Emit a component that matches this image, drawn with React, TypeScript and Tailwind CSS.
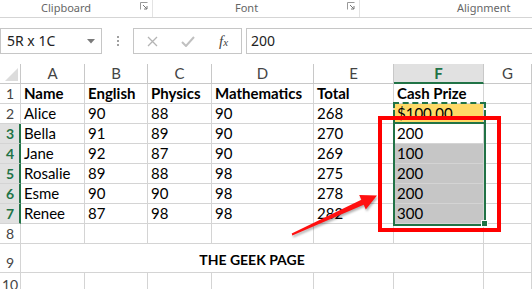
import { Fragment } from "react"

const cols = ["A", "B", "C", "D", "E", "F", "G"]

type Cell = { v?: string; bold?: boolean; bg?: string }

const rows: { n: string; h: string; hot?: boolean; cells: Cell[] }[] = [
  { n: "1", h: "h-[20px]", cells: [{ v: "Name", bold: true }, { v: "English", bold: true }, { v: "Physics", bold: true }, { v: "Mathematics", bold: true }, { v: "Total", bold: true }, { v: "Cash Prize", bold: true }, {}] },
  { n: "2", h: "h-[20px]", cells: [{ v: "Alice" }, { v: "90" }, { v: "88" }, { v: "90" }, { v: "268" }, { v: "$100.00", bg: "bg-[#ffd966]" }, {}] },
  { n: "3", h: "h-[20px]", hot: true, cells: [{ v: "Bella" }, { v: "91" }, { v: "89" }, { v: "90" }, { v: "270" }, { v: "200" }, {}] },
  { n: "4", h: "h-[20px]", hot: true, cells: [{ v: "Jane" }, { v: "92" }, { v: "87" }, { v: "90" }, { v: "269" }, { v: "100", bg: "bg-[#c6c6c6]" }, {}] },
  { n: "5", h: "h-[20px]", hot: true, cells: [{ v: "Rosalie" }, { v: "89" }, { v: "88" }, { v: "98" }, { v: "275" }, { v: "200", bg: "bg-[#c6c6c6]" }, {}] },
  { n: "6", h: "h-[20px]", hot: true, cells: [{ v: "Esme" }, { v: "90" }, { v: "90" }, { v: "98" }, { v: "278" }, { v: "200", bg: "bg-[#c6c6c6]" }, {}] },
  { n: "7", h: "h-[20px]", hot: true, cells: [{ v: "Renee" }, { v: "87" }, { v: "98" }, { v: "98" }, { v: "282" }, { v: "300", bg: "bg-[#c6c6c6]" }, {}] },
  { n: "8", h: "h-[20px]", cells: [{}, {}, {}, {}, {}, {}, {}] },
]

function Launcher() {
  return (
    <svg width="8" height="8" viewBox="0 0 8 8" className="mt-[2px]">
      <path d="M0.5 7.5V0.5H7.5" fill="none" stroke="#999" />
      <path d="M3 3L7 7M7 4V7H4" fill="none" stroke="#777" />
    </svg>
  )
}

export default function App() {
  return (
    <div className="relative w-[532px] h-[289px] overflow-hidden bg-white font-['Lato',sans-serif] text-black">
      {/* ribbon group labels */}
      <div className="flex h-[18px] border-b border-[#d5d5d5] font-['Noto_Sans',sans-serif] text-[11px] leading-[16px] text-[#666]">
        <div className="flex w-[153px] items-start border-r border-[#e3e3e3] pl-[41px] pr-[4px]">
          <span className="flex-1">Clipboard</span>
          <Launcher />
        </div>
        <div className="flex w-[207px] items-start border-r border-[#e3e3e3] pr-[4px]">
          <span className="flex-1 pl-[82px]">Font</span>
          <Launcher />
        </div>
        <div className="flex-1 pl-[97px]">Alignment</div>
      </div>

      {/* formula bar */}
      <div className="mt-[10px] flex h-[26px] items-stretch font-['Noto_Sans',sans-serif] text-[14px] text-[#222]">
        <div className="flex w-[102px] items-center border border-[#c6c6c6] pl-[6px] pr-[6px]">
          <span className="flex-1 leading-none">5R x 1C</span>
          <svg width="8" height="5" viewBox="0 0 8 5"><path d="M0 0H8L4 4.5Z" fill="#7a7a7a" /></svg>
        </div>
        <div className="flex w-[31px] flex-col items-center justify-center gap-[2px]">
          <span className="h-[2px] w-[2px] bg-[#a0a0a0]" />
          <span className="h-[2px] w-[2px] bg-[#a0a0a0]" />
          <span className="h-[2px] w-[2px] bg-[#a0a0a0]" />
        </div>
        <div className="flex w-[109px] items-center border border-[#c6c6c6] pl-[13px]">
          <svg width="11" height="11" viewBox="0 0 11 11"><path d="M1 1L10 10M10 1L1 10" stroke="#b4b4b4" strokeWidth="1.3" /></svg>
          <svg width="14" height="11" viewBox="0 0 14 11" className="ml-[23px]"><path d="M1 6L5 10L13 1" fill="none" stroke="#c0c0c0" strokeWidth="2" /></svg>
          <span className="ml-[24px] font-['Liberation_Serif',serif] text-[15px] italic text-[#444]">f<span className="text-[11px]">x</span></span>
        </div>
        <div className="ml-[4px] flex flex-1 items-center border-y border-l border-[#c6c6c6] pl-[4px] leading-none">200</div>
      </div>

      {/* grid */}
      <div className="mt-[10px] grid grid-cols-[21px_64px_63px_64px_102px_80px_90px_48px] text-[15px]">
        <div className="relative h-[20px] border-r border-b border-[#c8c8c8]">
          <svg width="13" height="13" viewBox="0 0 13 13" className="absolute left-[5px] top-[4px]"><path d="M13 0V13H0Z" fill="#dcdcdc" /></svg>
        </div>
        {cols.map((c) =>
          c === "F" ? (
            <div key={c} className="flex h-[20px] items-center justify-center border-r border-b-2 border-r-[#c8c8c8] border-b-[#217346] bg-[#e1e1e1] text-[15px] font-bold text-[#217346]">{c}</div>
          ) : (
            <div key={c} className="flex h-[20px] items-center justify-center border-r border-b border-[#c8c8c8] text-[15px] text-[#444]">{c}</div>
          )
        )}

        {rows.map((r) => (
          <Fragment key={r.n}>
            <div className={`flex ${r.h} items-end justify-center pb-[1px] text-[14px] leading-[17px] ${r.hot ? "border-r-2 border-b border-r-[#217346] border-b-[#d4d4d4] bg-[#e1e1e1] pl-[1px] font-bold text-[#217346]" : "border-r border-b border-[#d4d4d4] text-[#444]"}`}>{r.n}</div>
            {r.cells.map((c, i) => (
              <div key={i} className={`flex ${r.h} items-end overflow-visible whitespace-nowrap border-r border-b border-[#d4d4d4] pb-[1px] pl-[3px] leading-[17px] ${c.bold ? "font-bold" : ""} ${c.bg ?? ""}`}>{c.v}</div>
            ))}
          </Fragment>
        ))}

        <div className="flex h-[29px] items-end justify-center border-r border-b border-[#d4d4d4] pb-[1px] text-[14px] leading-[17px] text-[#444]">9</div>
        <div className="col-span-6 flex h-[29px] items-center justify-center border-r border-b border-[#d4d4d4] pt-[2px] text-[14px] font-bold">THE GEEK PAGE</div>
        <div className="h-[29px] border-r border-b border-[#d4d4d4]" />

        <div className="flex h-[20px] items-end justify-center border-r border-[#d4d4d4] text-[14px] leading-[17px] text-[#444]">10</div>
        {cols.map((c) => (
          <div key={c} className="h-[20px] border-r border-[#d4d4d4]" />
        ))}
      </div>

      {/* copy marquee on F2 */}
      <div className="absolute left-[393px] top-[102px] h-[22px] w-[93px] border-2 border-dashed border-[#217346]" />
      {/* selection F3:F7 */}
      <div className="absolute left-[393px] top-[122px] h-[104px] w-[93px] border-2 border-[#217346]" />
      <div className="absolute left-[481px] top-[220px] h-[7px] w-[7px] border border-white bg-[#217346]" />

      {/* red annotation */}
      <div className="absolute left-[378px] top-[116px] h-[116px] w-[123px] border-[4px] border-[#ff0000]" />
      <svg className="absolute left-0 top-0 drop-shadow-[1px_2px_1px_rgba(0,0,0,0.3)]" width="532" height="289" viewBox="0 0 532 289">
        <path d="M291.7 233.6L361.3 199.7L359.2 194.9L377 195.5L365.8 209.5L363.7 204.7L292.3 235.4Z" fill="#ff1010" />
      </svg>
    </div>
  )
}
